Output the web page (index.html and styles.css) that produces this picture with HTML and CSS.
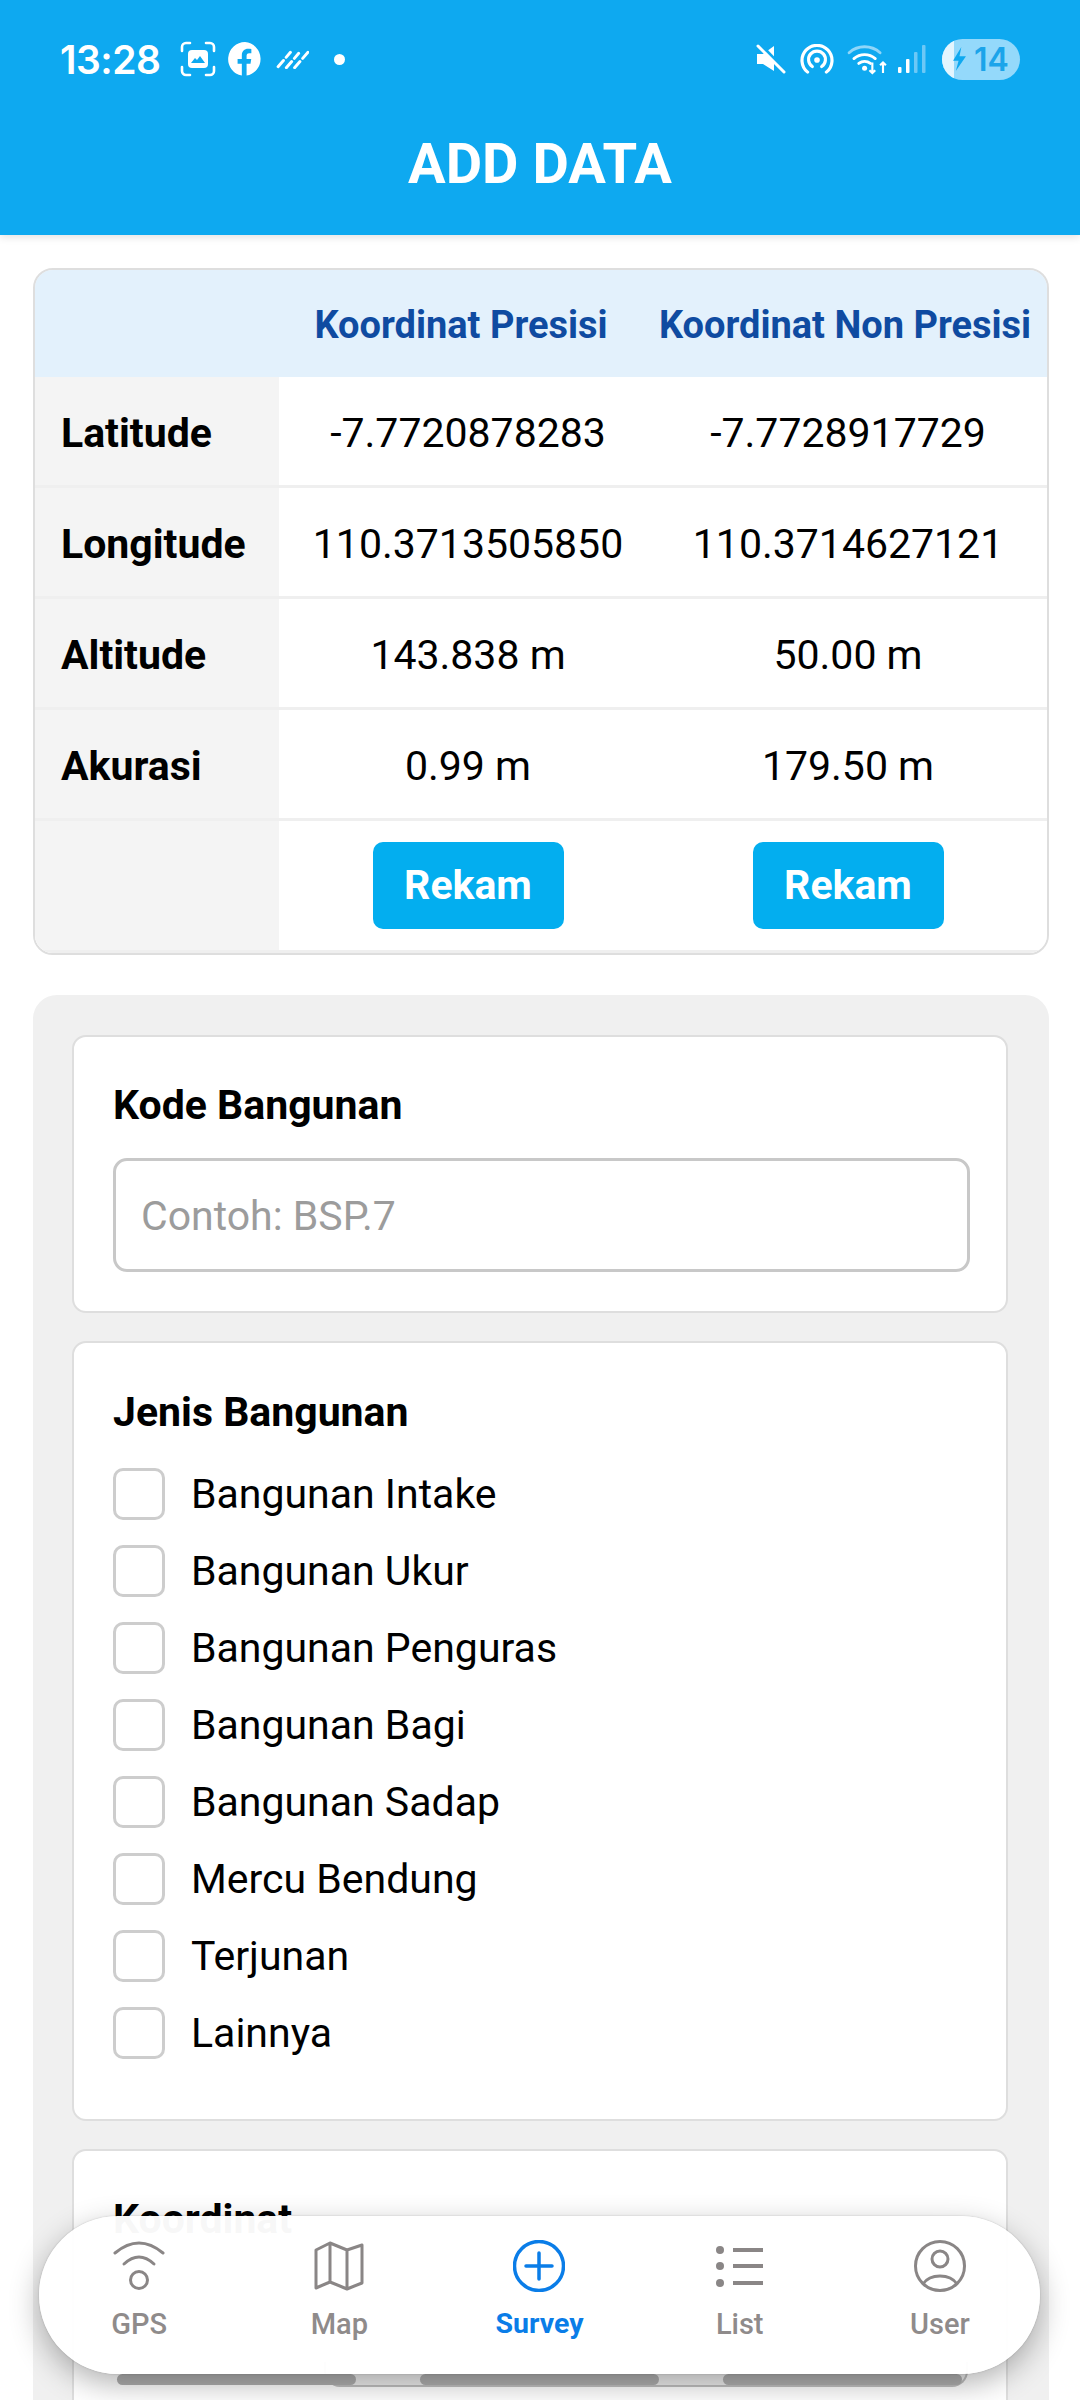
FILE: index.html
```html
<!DOCTYPE html>
<html lang="id">
<head>
<meta charset="utf-8">
<title>Add Data</title>
<link rel="stylesheet" href="styles.css">
</head>
<body>
<div class="screen">
  <header class="appbar">
    <div class="status">
      <div class="status-left">
        <span class="time">13:28</span>
        <svg class="ic-shot" viewBox="0 0 36 36"><g fill="none" stroke="#fff" stroke-width="2.6" stroke-linecap="round"><path d="M2 10V6a4 4 0 0 1 4-4h4M26 2h4a4 4 0 0 1 4 4v4M34 26v4a4 4 0 0 1-4 4h-4M10 34H6a4 4 0 0 1-4-4v-4"/></g><rect x="8" y="9" width="20" height="18" rx="4" fill="#fff"/><path d="M11 22l4-5 2 2 3-4 5 7z" fill="#0ea9f0"/></svg>
        <svg class="ic-fb" viewBox="0 0 34 34"><path d="M17 1a16 16 0 0 0-3 31.700V21.500h-4V17h4v-3.400c0-4 2.400-6.200 6-6.200 1.700 0 3 .3 3 .3v3.800h-2c-2 0-2.500 1.200-2.500 2.500V17h4.400l-.7 4.500h-3.700v11.200A16 16 0 0 0 17 1z" fill="#fff"/></svg>
        <svg class="ic-rain" viewBox="0 0 32 18"><g stroke="#fff" stroke-width="2.800" stroke-linecap="round" stroke-dasharray="8 4"><path d="M2 16L14 2M10 17L22 3M18 17L31 2"/></g></svg>
        <span class="dot"></span>
      </div>
      <div class="status-right">
        <svg class="ic-mute" viewBox="0 0 30 30"><path d="M1 10h6l11-8v25L7 20H1z" fill="#fff"/><path d="M5 1l26 27" stroke="#0ea9f0" stroke-width="3"/><path d="M2 2l26 26" stroke="#fff" stroke-width="3" stroke-linecap="round"/></svg>
        <svg class="ic-cast" viewBox="0 0 36 32"><g fill="none" stroke="#fff" stroke-width="3.400" stroke-linecap="round"><path d="M8 30a16 16 0 1 1 20 0"/><path d="M13 24a9 9 0 1 1 10 0"/></g><circle cx="18" cy="17" r="3" fill="#fff"/></svg>
        <svg class="ic-wifi" viewBox="0 0 42 32"><g fill="none" stroke-linecap="round" stroke-width="3"><path d="M2 9a24 24 0 0 1 32 0" stroke="#8fd6f9"/><path d="M7 15a17 17 0 0 1 22 0" stroke="#fff"/><path d="M12 20a10 10 0 0 1 12 0" stroke="#fff"/></g><circle cx="18" cy="25" r="2.600" fill="#fff"/><g stroke="#fff" stroke-width="2.200" fill="none"><path d="M26 19v11M23 27l3 3 3-3M37 30V19M34 22l3-3 3 3"/></g></svg>
        <svg class="ic-signal" viewBox="0 0 28 30"><rect x="0" y="23" width="3.500" height="6" rx="1" fill="#fff"/><rect x="8" y="15" width="3.500" height="14" rx="1" fill="#fff"/><rect x="16" y="8" width="3.500" height="21" rx="1" fill="#6cc8f6"/><rect x="24" y="1" width="3.500" height="28" rx="1" fill="#6cc8f6"/></svg>
        <div class="battery"><span class="bat-fill"></span><svg class="ic-bolt" viewBox="0 0 16 26"><path d="M10 0L1 15h6l-3 11 11-16H8z" fill="#0ea9f0"/></svg><span class="bat-num">14</span></div>
      </div>
    </div>
    <h1 class="title">ADD DATA</h1>
  </header>

  <main class="content">
    <section class="coords">
      <div class="row row-head">
        <div class="cell label"></div>
        <div class="cell head">Koordinat Presisi</div>
        <div class="cell head">Koordinat Non Presisi</div>
      </div>
      <div class="row">
        <div class="cell label">Latitude</div>
        <div class="cell">-7.7720878283</div>
        <div class="cell">-7.7728917729</div>
      </div>
      <div class="row">
        <div class="cell label">Longitude</div>
        <div class="cell">110.3713505850</div>
        <div class="cell">110.3714627121</div>
      </div>
      <div class="row">
        <div class="cell label">Altitude</div>
        <div class="cell">143.838 m</div>
        <div class="cell">50.00 m</div>
      </div>
      <div class="row">
        <div class="cell label">Akurasi</div>
        <div class="cell">0.99 m</div>
        <div class="cell">179.50 m</div>
      </div>
      <div class="row row-action">
        <div class="cell label"></div>
        <div class="cell"><button class="rekam">Rekam</button></div>
        <div class="cell"><button class="rekam">Rekam</button></div>
      </div>
    </section>

    <section class="panel">
      <div class="card card-kode">
        <h2 class="card-title">Kode Bangunan</h2>
        <input class="field" type="text" placeholder="Contoh: BSP.7">
      </div>
      <div class="card card-jenis">
        <h2 class="card-title">Jenis Bangunan</h2>
        <ul class="checks">
          <li class="check"><span class="box"></span>Bangunan Intake</li>
          <li class="check"><span class="box"></span>Bangunan Ukur</li>
          <li class="check"><span class="box"></span>Bangunan Penguras</li>
          <li class="check"><span class="box"></span>Bangunan Bagi</li>
          <li class="check"><span class="box"></span>Bangunan Sadap</li>
          <li class="check"><span class="box"></span>Mercu Bendung</li>
          <li class="check"><span class="box"></span>Terjunan</li>
          <li class="check"><span class="box"></span>Lainnya</li>
        </ul>
      </div>
      <div class="card card-koord">
        <h2 class="card-title">Koordinat</h2>
        <div class="seg-wrap">
          <div class="seg-outline"></div>
          <div class="seg"><span class="seg-bar"></span><span class="seg-bar"></span><span class="seg-bar"></span></div>
        </div>
      </div>
    </section>
  </main>

  <nav class="tabbar">
    <div class="tab">
      <svg class="tab-ic" viewBox="0 0 52 52"><g fill="none" stroke="#8a8686" stroke-width="3" stroke-linecap="round"><path d="M2 13Q26-7 50 13"/><path d="M11 24Q26 10 41 24"/><circle cx="26" cy="40" r="8.500"/></g></svg>
      <span class="tab-label">GPS</span>
    </div>
    <div class="tab">
      <svg class="tab-ic" viewBox="0 0 52 52"><path d="M3 10l14-7 17 7 15-5v38l-15 6-17-7-14 6zM17 3v39M34 10v39" fill="none" stroke="#8a8686" stroke-width="3" stroke-linejoin="round"/></svg>
      <span class="tab-label">Map</span>
    </div>
    <div class="tab tab-active">
      <svg class="tab-ic" viewBox="0 0 52 52"><g fill="none" stroke="#0a7de8" stroke-width="3.500"><circle cx="26" cy="26" r="24.500"/><path d="M26 13v26M13 26h26" stroke-linecap="round"/></g></svg>
      <span class="tab-label">Survey</span>
    </div>
    <div class="tab">
      <svg class="tab-ic" viewBox="0 0 52 52"><g fill="#8a8686"><circle cx="6" cy="10" r="4"/><circle cx="6" cy="26" r="4"/><circle cx="6" cy="43" r="4"/><rect x="19" y="8" width="30" height="4"/><rect x="19" y="24" width="30" height="4"/><rect x="19" y="41" width="30" height="4"/></g></svg>
      <span class="tab-label">List</span>
    </div>
    <div class="tab">
      <svg class="tab-ic" viewBox="0 0 52 52"><g fill="none" stroke="#8a8686" stroke-width="3"><circle cx="26" cy="26" r="24.500"/><circle cx="26" cy="19" r="8"/><path d="M9 44c4-6 10-8 17-8s13 2 17 8"/></g></svg>
      <span class="tab-label">User</span>
    </div>
  </nav>
</div>
</body>
</html>
```
FILE: styles.css
```css
* { box-sizing: border-box; }
html, body { margin: 0; padding: 0; }
body { width: 1080px; height: 2400px; overflow: hidden; background: #fff; font-family: Roboto, "Liberation Sans", sans-serif; color: #000; }
.screen { position: relative; width: 1080px; height: 2400px; overflow: hidden; }

.appbar { height: 235px; background: #0ea9f0; color: #fff; padding-top: 38px; box-shadow: 0 2px 8px rgba(0,0,0,.12); position: relative; z-index: 1; }
.status { display: flex; justify-content: space-between; align-items: center; height: 42px; padding: 0 60px 0 60px; }
.status-left, .status-right { display: flex; align-items: center; }
.time { font-family: Inter, Roboto, sans-serif; font-size: 39px; font-weight: 600; letter-spacing: -.5px; margin-right: 19px; }
.ic-shot { width: 36px; height: 36px; margin-right: 11px; }
.ic-fb { width: 36px; height: 36px; margin-right: 13px; }
.ic-rain { width: 33px; height: 19px; margin-right: 25px; }
.dot { width: 11px; height: 11px; border-radius: 50%; background: #fff; }
.ic-mute { width: 30px; height: 30px; margin-right: 14px; }
.ic-cast { width: 34px; height: 30px; margin-right: 13px; }
.ic-wifi { width: 41px; height: 31px; margin-right: 10px; }
.ic-signal { width: 28px; height: 30px; margin-right: 16px; }
.battery { position: relative; width: 78px; height: 41px; border-radius: 21px; background: #94d9fb; display: flex; align-items: center; overflow: hidden; }
.bat-fill { position: absolute; left: 0; top: 0; bottom: 0; width: 12px; background: #e3f5fe; }
.ic-bolt { position: relative; width: 15px; height: 24px; margin-left: 10px; margin-right: 7px; }
.bat-num { position: relative; font-family: Inter, Roboto, sans-serif; font-size: 32px; font-weight: 600; color: #1ba4ea; }
.title { margin: 53px 0 0; text-align: center; font-size: 56px; line-height: 62px; font-weight: 700; }

.content { padding: 33px 31px 0 33px; }
.coords { width: 1016px; height: 687px; border: 2px solid #dedede; border-radius: 20px; overflow: hidden; background: #f4f4f4; }
.row { display: grid; grid-template-columns: 244px 378px 1fr; height: 111px; border-bottom: 3px solid #efefef; background: #fff; }
.row-head { height: 107px; background: #e3f1fc; border-bottom: 0; }
.row-action { height: 132px; }
.row-head .label { background: transparent; }
.cell { display: flex; align-items: center; justify-content: center; font-size: 41px; padding-top: 3px; }
.cell:last-child { padding-right: 8px; }
.label { background: #f4f4f4; justify-content: flex-start; padding-left: 26px; font-weight: 700; }
.head, .head:last-child { font-size: 38px; font-weight: 700; color: #0f4ba1; white-space: nowrap; padding: 2px 14px 0 0; }
.rekam { width: 191px; height: 87px; border: 0; border-radius: 10px; background: #03aeef; color: #fff; font-family: inherit; font-size: 41px; font-weight: 700; margin-top: -4px; }

.panel { margin-top: 40px; width: 1016px; height: 1500px; background: #f0f0f0; border-radius: 24px; padding: 40px 41px 0 39px; }
.card { background: #fff; border: 2px solid #dedede; border-radius: 14px; padding: 0 39px; margin-bottom: 28px; }
.card-kode { height: 278px; }
.card-jenis { height: 780px; }
.card-koord { height: 400px; }
.card-title { margin: 0; padding-top: 45px; font-size: 41px; line-height: 46px; font-weight: 700; }
.field { display: block; width: 857px; height: 114px; margin-top: 30px; border: 3px solid #c8c8c8; border-radius: 14px; padding: 2px 25px 0; font-family: inherit; font-size: 41px; outline: 0; background: #fff; }
.field::placeholder { color: #9c9c9c; opacity: 1; }
.checks { list-style: none; margin: 20px 0 0; padding: 0; }
.card-jenis .card-title { padding-top: 46px; }
.check { display: flex; align-items: center; height: 77px; font-size: 41px; }
.box { width: 52px; height: 52px; border: 3px solid #cdcdcd; border-radius: 10px; margin-right: 26px; background: #fff; }

.seg-wrap { position: relative; margin-top: 132px; height: 40px; width: 855px; }
.seg-outline { position: absolute; left: 211px; top: -12px; width: 644px; height: 25px; background: #eeeeee; border: 2px solid #c0c0c0; border-top: 0; border-radius: 0 0 16px 16px; }
.seg { position: absolute; left: 4px; right: 6px; top: 0; display: flex; gap: 64px; }
.seg-bar { flex: 1; height: 11px; background: #b0b0b0; border-radius: 6px; }

.tabbar { position: absolute; left: 39px; top: 2216px; width: 1001px; height: 158px; border-radius: 90px; background: rgba(255,255,255,.97); box-shadow: 0 10px 30px rgba(0,0,0,.3), 0 0 2px rgba(0,0,0,.2); display: grid; grid-template-columns: repeat(5, 1fr); z-index: 2; }
.tab { display: flex; flex-direction: column; align-items: center; padding-top: 24px; color: #8f8b8b; }
.tab-ic { width: 52px; height: 52px; }
.tab-label { margin-top: 15px; font-size: 29px; line-height: 34px; font-weight: 500; }
.tab-active { color: #0a7de8; }
.tab-active .tab-label { font-weight: 700; font-size: 28.500px; }
```
